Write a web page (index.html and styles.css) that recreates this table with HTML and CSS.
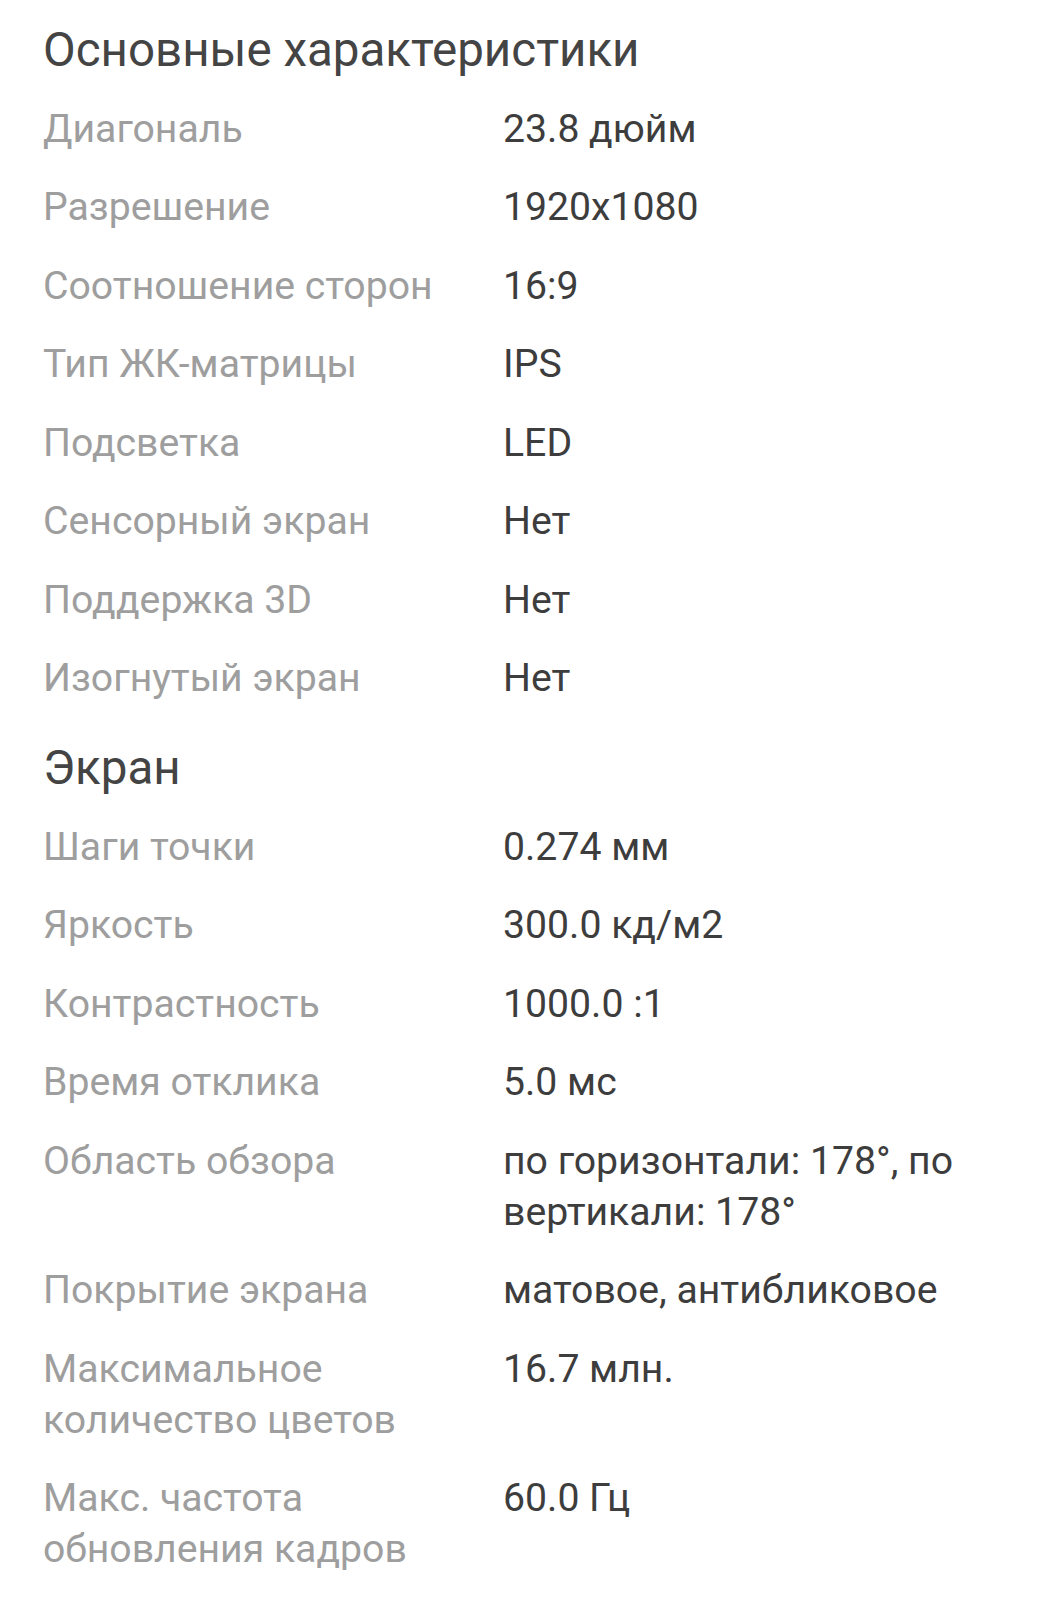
FILE: index.html
```html
<!DOCTYPE html>
<html lang="ru">
<head>
    <meta charset="UTF-8">
    <meta name="viewport" content="width=device-width, initial-scale=1.0">
    <title>Характеристики монитора</title>
    <link rel="stylesheet" href="styles.css">
</head>
<body>
    <div class="specs">
        <section class="section">
            <h2>Основные характеристики</h2>
            <div class="row"><div class="label">Диагональ</div><div class="value">23.8 дюйм</div></div>
            <div class="row"><div class="label">Разрешение</div><div class="value">1920x1080</div></div>
            <div class="row"><div class="label">Соотношение сторон</div><div class="value">16:9</div></div>
            <div class="row"><div class="label">Тип ЖК-матрицы</div><div class="value">IPS</div></div>
            <div class="row"><div class="label">Подсветка</div><div class="value">LED</div></div>
            <div class="row"><div class="label">Сенсорный экран</div><div class="value">Нет</div></div>
            <div class="row"><div class="label">Поддержка 3D</div><div class="value">Нет</div></div>
            <div class="row"><div class="label">Изогнутый экран</div><div class="value">Нет</div></div>
        </section>

        <section class="section">
            <h2>Экран</h2>
            <div class="row"><div class="label">Шаги точки</div><div class="value">0.274 мм</div></div>
            <div class="row"><div class="label">Яркость</div><div class="value">300.0 кд/м2</div></div>
            <div class="row"><div class="label">Контрастность</div><div class="value">1000.0 :1</div></div>
            <div class="row"><div class="label">Время отклика</div><div class="value">5.0 мс</div></div>
            <div class="row"><div class="label">Область обзора</div><div class="value">по горизонтали: 178°, по вертикали: 178°</div></div>
            <div class="row"><div class="label">Покрытие экрана</div><div class="value">матовое, антибликовое</div></div>
            <div class="row"><div class="label">Максимальное количество цветов</div><div class="value">16.7 млн.</div></div>
            <div class="row"><div class="label">Макс. частота обновления кадров</div><div class="value">60.0 Гц</div></div>
        </section>
    </div>
</body>
</html>
```

FILE: styles.css
```css
body {
    font-family: Roboto, "Noto Sans", sans-serif;
    background-color: #fff;
    margin: 0;
    color: #3d3d3d;
}
.specs {
    padding: 0 60px 0 43px;
}
.section {
    padding-top: 23px;
}
h2 {
    font-size: 47.5px;
    font-weight: normal;
    line-height: 55px;
    color: #444;
    margin: 0 0 12px 0;
}
.row {
    display: grid;
    grid-template-columns: 460px 1fr;
    padding: 13.75px 0;
    font-size: 39.2px;
    line-height: 51px;
}
.label {
    color: #9e9e9e;
    padding-right: 20px;
}
.value {
    color: #3d3d3d;
}
```
